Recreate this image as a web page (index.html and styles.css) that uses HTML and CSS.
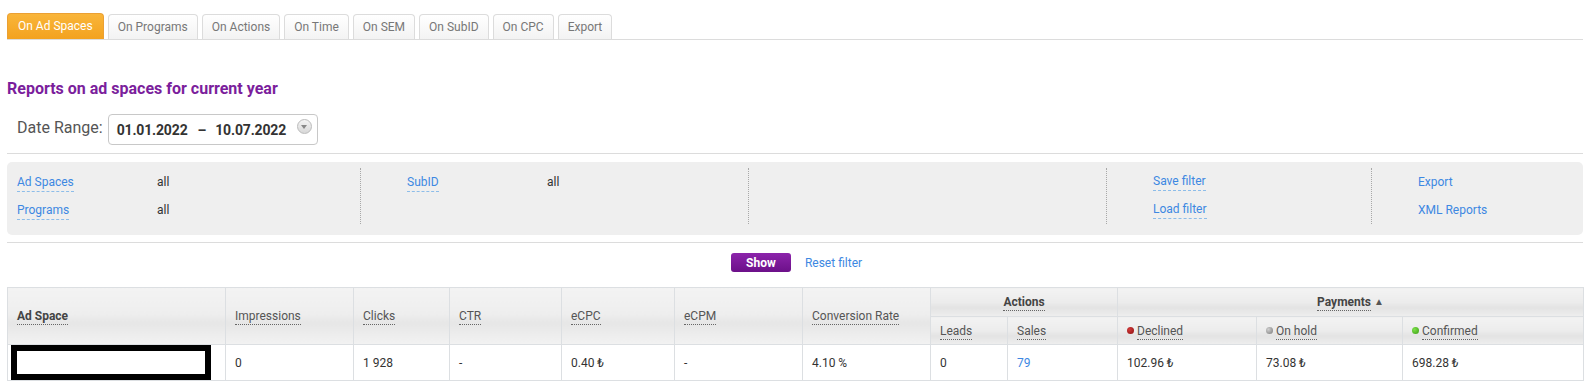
FILE: index.html
```html
<!DOCTYPE html>
<html lang="en">
<head>
  <meta charset="UTF-8" />
  <title>Reports on ad spaces</title>
  <link rel="stylesheet" href="styles.css">
</head>
<body>
  <div class="page">
    <ul class="tabs">
      <li class="tab active">On Ad Spaces</li>
      <li class="tab">On Programs</li>
      <li class="tab">On Actions</li>
      <li class="tab">On Time</li>
      <li class="tab">On SEM</li>
      <li class="tab">On SubID</li>
      <li class="tab">On CPC</li>
      <li class="tab">Export</li>
    </ul>

    <h2 class="title">Reports on ad spaces for current year</h2>

    <div class="date-row">
      <span class="date-label">Date Range:</span>
      <div class="date-box">
        <span>01.01.2022</span>
        <span class="dash">–</span>
        <span>10.07.2022</span>
        <span class="date-drop"></span>
      </div>
    </div>

    <div class="rule"></div>

    <div class="filter">
      <div class="fcol c1">
        <div class="frow"><span class="fname"><a class="flink">Ad Spaces</a></span><span class="fval">all</span></div>
        <div class="frow"><span class="fname"><a class="flink">Programs</a></span><span class="fval">all</span></div>
      </div>
      <div class="fcol c2">
        <div class="frow"><span class="fname"><a class="flink">SubID</a></span><span class="fval">all</span></div>
      </div>
      <div class="fcol c3"></div>
      <div class="fcol c4">
        <div class="frow"><a class="flink">Save filter</a></div>
        <div class="frow"><a class="flink">Load filter</a></div>
      </div>
      <div class="fcol c5">
        <div class="frow"><a class="plain">Export</a></div>
        <div class="frow"><a class="plain">XML Reports</a></div>
      </div>
    </div>

    <div class="rule rule-low"></div>

    <div class="actions">
      <button class="show-btn">Show</button>
      <a class="reset">Reset filter</a>
    </div>

    <table class="report">
      <colgroup>
        <col style="width:218px"><col style="width:128px"><col style="width:96px"><col style="width:112px">
        <col style="width:113px"><col style="width:128px"><col style="width:128px"><col style="width:77px">
        <col style="width:110px"><col style="width:139px"><col style="width:146px"><col style="width:181px">
      </colgroup>
      <thead>
        <tr class="h1">
          <th rowspan="2"><span class="u strong">Ad Space</span></th>
          <th rowspan="2"><span class="u">Impressions</span></th>
          <th rowspan="2"><span class="u">Clicks</span></th>
          <th rowspan="2"><span class="u">CTR</span></th>
          <th rowspan="2"><span class="u">eCPC</span></th>
          <th rowspan="2"><span class="u">eCPM</span></th>
          <th rowspan="2"><span class="u">Conversion Rate</span></th>
          <th colspan="2" class="group"><span class="u strong">Actions</span></th>
          <th colspan="3" class="group"><span class="u strong">Payments</span><span class="sort">▲</span></th>
        </tr>
        <tr class="h2">
          <th><span class="u">Leads</span></th>
          <th><span class="u">Sales</span></th>
          <th><span class="dot red"></span><span class="u">Declined</span></th>
          <th><span class="dot grey"></span><span class="u">On hold</span></th>
          <th><span class="dot green"></span><span class="u">Confirmed</span></th>
        </tr>
      </thead>
      <tbody>
        <tr>
          <td class="hidden-cell"><div class="redact"></div></td>
          <td>0</td>
          <td>1 928</td>
          <td>-</td>
          <td>0.40 ₺</td>
          <td>-</td>
          <td>4.10 %</td>
          <td>0</td>
          <td><a class="num-link">79</a></td>
          <td>102.96 ₺</td>
          <td>73.08 ₺</td>
          <td>698.28 ₺</td>
        </tr>
      </tbody>
    </table>
  </div>
</body>
</html>
```

FILE: styles.css
```css
body {
  margin: 0;
  font-family: "Roboto", "Liberation Sans", sans-serif;
  font-size: 12px;
  color: #333;
  background: #fff;
}

.page {
  padding: 0 3px 0 7px;
}

.tabs {
  list-style: none;
  margin: 13px 0 0;
  padding: 0;
  display: flex;
  gap: 4px;
  border-bottom: 1px solid #dcdcdc;
}

.tab {
  height: 24px;
  line-height: 24px;
  padding: 0 9px;
  border: 1px solid #dcdcdc;
  border-bottom: none;
  border-radius: 4px 4px 0 0;
  background: linear-gradient(#ffffff, #f3f3f3);
  color: #777;
  margin-top: 1px;
}

.tab.active {
  padding: 0 10px;
  background: linear-gradient(#f9b53a, #f3a21f);
  border-color: #eba033;
  color: #fff;
  height: 25px;
  margin-top: 0;
}

.title {
  margin: 40px 0 0;
  font-size: 16px;
  line-height: 18px;
  font-weight: bold;
  color: #7b1e9c;
}

.date-row {
  display: flex;
  align-items: center;
  margin-top: 16px;
  padding-left: 10px;
}

.date-label {
  font-size: 16px;
  color: #555;
  margin-right: 5px;
  margin-top: -4px;
}

.date-box {
  display: flex;
  align-items: center;
  height: 29px;
  width: 200px;
  padding: 0 0 0 8px;
  border: 1px solid #c8c8c8;
  border-radius: 4px;
  font-size: 14px;
  letter-spacing: -0.15px;
  font-weight: bold;
  color: #333;
}

.dash {
  margin: 0 9px 0 10px;
}

.date-drop {
  width: 13px;
  height: 13px;
  margin-left: auto;
  margin-right: 5px;
  margin-top: -6px;
  border: 1px solid #bbb;
  border-radius: 50%;
  background: linear-gradient(#f4f4f4, #d8d8d8);
  position: relative;
}

.date-drop::after {
  content: "";
  position: absolute;
  left: 3px;
  top: 5px;
  border-left: 3.5px solid transparent;
  border-right: 3.5px solid transparent;
  border-top: 4px solid #888;
}

.rule {
  height: 1px;
  background: #dcdcdc;
  margin-top: 8px;
}

.rule-low {
  margin-top: 7px;
}

.filter {
  margin-top: 8px;
  background: #efefef;
  border-radius: 5px;
  padding: 6px 0 11px;
  display: flex;
}

.fcol {
  flex: none;
  box-sizing: border-box;
  min-height: 56px;
  padding-left: 46px;
  border-left: 1px dotted #a8a8a8;
}

.fcol.c1 {
  width: 353px;
  padding-left: 10px;
  border-left: none;
}

.fcol.c2 { width: 388px; }
.fcol.c3 { width: 358px; }
.fcol.c4 { width: 265px; }
.fcol.c5 { flex: 1; }

.frow {
  height: 28px;
  display: flex;
  align-items: center;
}

.fname {
  width: 140px;
  flex: none;
}

.flink, .plain {
  color: #3d88e2;
  cursor: pointer;
}

.flink {
  border-bottom: 1px dashed #8dbde9;
  padding-bottom: 2px;
}

.fval {
  color: #333;
}

.actions {
  margin-top: 10px;
  display: flex;
  justify-content: center;
  align-items: center;
  gap: 14px;
  padding-left: 3px;
}

.show-btn {
  width: 60px;
  height: 19px;
  border: none;
  border-radius: 3px;
  background: linear-gradient(#8c24ab, #6c1089);
  color: #fff;
  font-family: inherit;
  font-size: 12px;
  font-weight: bold;
  padding: 0;
}

.reset {
  color: #3d88e2;
}

.report {
  margin-top: 15px;
  width: 1576px;
  table-layout: fixed;
  border-collapse: collapse;
}

.report th {
  font-weight: normal;
  color: #555;
  text-align: left;
  padding: 0 9px;
  border: 1px solid #dcdfe2;
  background: linear-gradient(#f3f3f3 0%, #ececec 50%, #e3e3e3 68%, #eeeeee 100%);
}

.report th[rowspan] {
  background: linear-gradient(#f3f3f3 0%, #eeeeee 45%, #e6e6e6 62%, #ececec 80%, #f2f2f2 100%);
}

.report .h1 th {
  height: 28px;
}

.report .h2 th {
  height: 27px;
}

.report th.group {
  text-align: center;
}

.u {
  border-bottom: 1px dotted #666;
  padding-bottom: 1px;
}

.strong {
  font-weight: bold;
  color: #444;
}

.sort {
  font-size: 10px;
  color: #555;
  margin-left: 3px;
  vertical-align: 1px;
}

.dot {
  display: inline-block;
  width: 7px;
  height: 7px;
  border-radius: 50%;
  margin-right: 3px;
  vertical-align: 1px;
}

.dot.red {
  background: radial-gradient(circle at 35% 35%, #d23a3a, #8c0f0f);
}

.dot.grey {
  background: radial-gradient(circle at 35% 35%, #d0d0d0, #7a7a7a);
}

.dot.green {
  background: radial-gradient(circle at 35% 35%, #7ce04a, #3c9e14);
}

.report td {
  height: 35px;
  padding: 0 9px;
  border: 1px solid #dcdfe2;
  color: #333;
}

.report td.hidden-cell {
  padding: 0 0 0 3px;
  vertical-align: top;
}

.redact {
  width: 188px;
  height: 23px;
  border: 6px solid #000;
  background: #fff;
}

.num-link {
  color: #3d88e2;
}
```
